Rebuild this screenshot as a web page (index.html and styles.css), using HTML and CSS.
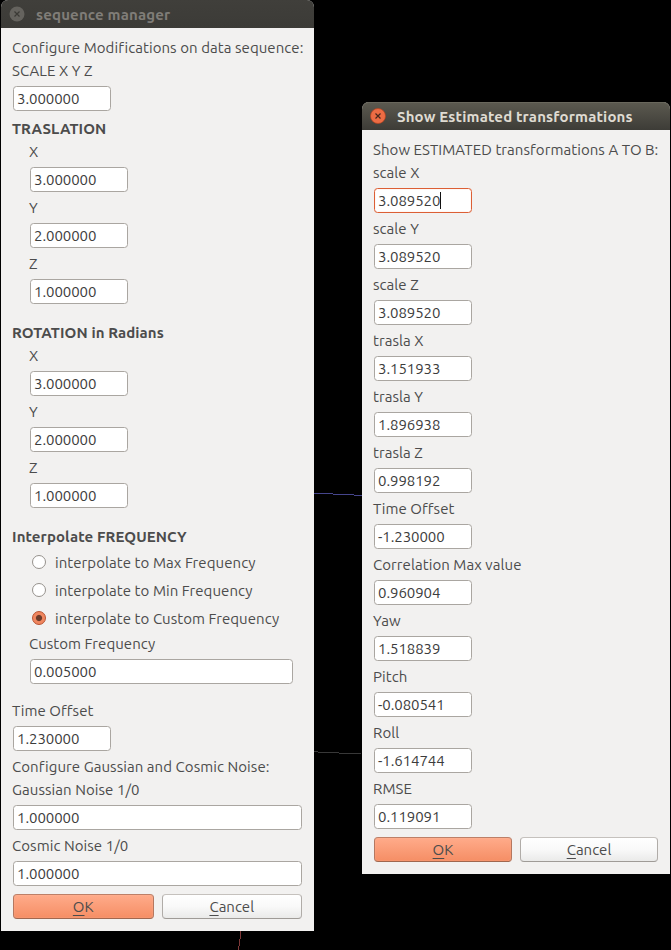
FILE: index.html
```html
<!DOCTYPE html>
<html lang="en">
<head>
<meta charset="utf-8">
<title>sequence manager</title>
<link rel="stylesheet" href="styles.css">
</head>
<body>
<svg class="scene" width="671" height="950" viewBox="0 0 671 950" shape-rendering="crispEdges">
  <path d="M314 493.5h19M333 494.5h21M354 495.5h8" stroke="#45458c"/>
  <path d="M314 751.5h4M318 752.5h21M339 753.5h22" stroke="#383838"/>
  <path d="M240.5 931v8M239.5 939v7M238.5 946v4" stroke="#7d3838"/>
</svg>
<main class="desktop">
  <section class="window manager">
    <header class="titlebar">
      <svg class="close" width="16" height="16" viewBox="0 0 16 16"><circle cx="8" cy="8" r="7.5"/><path d="M5.5 5.5l5 5M10.5 5.5l-5 5"/></svg>
      <h1>sequence manager</h1>
    </header>
    <form class="body">
      <p class="label">Configure Modifications on data sequence:</p>
      <p class="label">SCALE X Y Z</p><div class="field">3.000000</div>
      <h2 class="label first">TRASLATION</h2>
      <div class="group">
        <p class="label">X</p><div class="field">3.000000</div>
        <p class="label">Y</p><div class="field">2.000000</div>
        <p class="label">Z</p><div class="field">1.000000</div>
      </div>
      <h2 class="label">ROTATION in Radians</h2>
      <div class="group">
        <p class="label">X</p><div class="field">3.000000</div>
        <p class="label">Y</p><div class="field">2.000000</div>
        <p class="label">Z</p><div class="field">1.000000</div>
      </div>
      <h2 class="label">Interpolate FREQUENCY</h2>
      <div class="group">
        <div class="option"><i class="radio"></i><span>interpolate to Max Frequency</span></div>
        <div class="option"><i class="radio"></i><span>interpolate to Min Frequency</span></div>
        <div class="option"><i class="radio on"></i><span>interpolate to Custom Frequency</span></div>
        <p class="label">Custom Frequency</p><div class="field custom">0.005000</div>
      </div>
      <p class="label offset">Time Offset</p><div class="field">1.230000</div>
      <p class="label">Configure Gaussian and Cosmic Noise:</p>
      <p class="label">Gaussian Noise 1/0</p><div class="field wide">1.000000</div>
      <p class="label">Cosmic Noise 1/0</p><div class="field wide">1.000000</div>
      <div class="actions"><button type="button" class="ok"><u>O</u>K</button><button type="button"><u>C</u>ancel</button></div>
    </form>
  </section>
  <section class="window estimates">
    <header class="titlebar">
      <svg class="close" width="16" height="16" viewBox="0 0 16 16"><circle cx="8" cy="8" r="7.5"/><path d="M5.5 5.5l5 5M10.5 5.5l-5 5"/></svg>
      <h1>Show Estimated transformations</h1>
    </header>
    <form class="body">
      <p class="label">Show ESTIMATED transformations A TO B:</p>
      <p class="label">scale X</p><div class="field focused">3.089520<i class="caret"></i></div>
      <p class="label">scale Y</p><div class="field">3.089520</div>
      <p class="label">scale Z</p><div class="field">3.089520</div>
      <p class="label">trasla X</p><div class="field">3.151933</div>
      <p class="label">trasla Y</p><div class="field">1.896938</div>
      <p class="label">trasla Z</p><div class="field">0.998192</div>
      <p class="label">Time Offset</p><div class="field">-1.230000</div>
      <p class="label">Correlation Max value</p><div class="field">0.960904</div>
      <p class="label">Yaw</p><div class="field">1.518839</div>
      <p class="label">Pitch</p><div class="field">-0.080541</div>
      <p class="label">Roll</p><div class="field">-1.614744</div>
      <p class="label">RMSE</p><div class="field">0.119091</div>
      <div class="actions"><button type="button" class="ok"><u>O</u>K</button><button type="button"><u>C</u>ancel</button></div>
    </form>
  </section>
</main>
</body>
</html>
```
FILE: styles.css
```css
* { box-sizing: border-box; }
body {
  margin: 0;
  height: 950px;
  overflow: hidden;
  background: #000;
  color: #4c4c4c;
  font: 15px/22px "Ubuntu", "Noto Sans", sans-serif;
  letter-spacing: 0.065px;
}
h1, h2, p { margin: 0; font-size: inherit; }
.scene { position: absolute; left: 0; top: 0; }
.desktop { position: relative; display: flex; align-items: flex-start; gap: 48px; padding-left: 1px; }
.window { background: #f2f1f0; border-radius: 7px 7px 0 0; flex: none; }
.manager { width: 313px; height: 931px; }
.estimates { width: 308px; height: 772px; margin-top: 102px; }
.titlebar {
  display: flex;
  align-items: center;
  height: 28px;
  padding: 2px 0 0 7.5px;
  gap: 11.5px;
  border-radius: 7px 7px 0 0;
  background: linear-gradient(#403f3b, #3c3b37);
  color: #807d78;
}
.titlebar h1 { line-height: 26px; letter-spacing: 0.16px; white-space: nowrap; }
.close { flex: none; margin-top: -2px; }
.close circle { fill: #65635e; }
.close path { stroke: #3b3a36; stroke-width: 1.2; fill: none; }
.estimates .titlebar { background: linear-gradient(#5c5a50, #3d3c37); box-shadow: inset 0 1px #69675c; color: #dfdbd2; }
.estimates .close circle { fill: #ec6c44; stroke: #b9431f; stroke-width: 0.7; }
.estimates .close path { stroke: #49271b; }
.body { padding: 9px 12px 0 11px; }
.label { height: 23px; white-space: nowrap; }
h2.label { height: 36px; padding-top: 13px; font-weight: 700; letter-spacing: 0.11px; }
h2.first { height: 25px; padding-top: 2px; }
.group { padding-left: 17px; }
.offset { height: 34px; padding-top: 11px; }
.field {
  display: flex;
  align-items: center;
  width: 98px;
  height: 25px;
  margin: 3px 0 5px 1px;
  padding-left: 3px;
  border: 1px solid #aaa6a1;
  border-radius: 3.5px;
  background: #fff;
  color: #3c3c3c;
  letter-spacing: -0.07px;
}
.wide { width: 289px; }
.custom { width: 263px; }
.focused { border-color: #dc5f35; box-shadow: inset 0 0 1px #f6b59c; }
.caret { width: 1px; height: 17px; background: #111; }
.option { display: flex; align-items: center; height: 28px; gap: 9px; padding-left: 3px; white-space: nowrap; }
.radio { flex: none; width: 14px; height: 14px; border: 1px solid #96928d; border-radius: 50%; background: #fff; margin-top: -2px; }
.radio.on { border-color: #b8512f; background: radial-gradient(circle, #6b3b2a 0 2.6px, #f0865f 3.6px); }
.actions { display: flex; gap: 8px; margin: 8px 0 0 1px; }
button {
  flex: 1;
  height: 25px;
  padding: 0;
  border: 1px solid #b4b0ab;
  border-color: #c5c1bd #b0aca8 #9f9b97;
  border-radius: 4px;
  background: linear-gradient(#fff, #f9f9f9 50%, #eaeae9);
  color: #4c4c4c;
  font: inherit;
  line-height: 23px;
}
.ok { border-color: #bd7f67 #b5775f #a0674f; background: linear-gradient(#ffab8a, #f58e65); box-shadow: inset 0 0 1px #ffc9b3; }
u { text-underline-offset: 3px; text-decoration-thickness: 1px; }
```
